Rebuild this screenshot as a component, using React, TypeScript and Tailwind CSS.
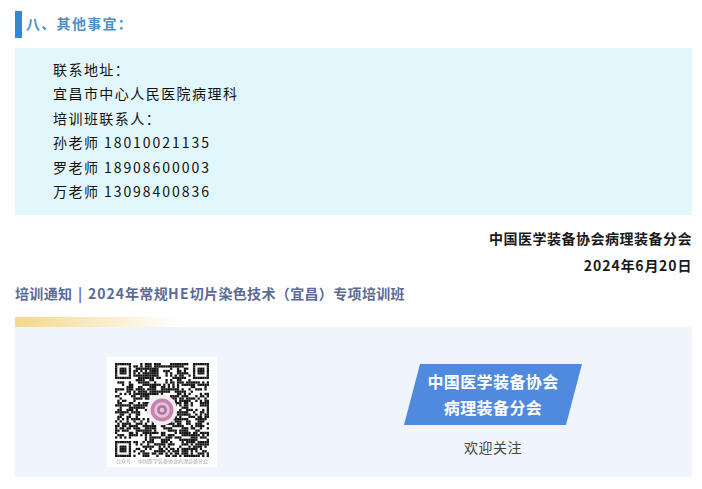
const CONTACTS = [
  { name: '孙老师', phone: '18010021135' },
  { name: '罗老师', phone: '18908600003' },
  { name: '万老师', phone: '13098400836' },
]

const LINES = ['联系地址：', '宜昌市中心人民医院病理科', '培训班联系人：']

const SIZE = 41

// finder pattern test, the rest is filled pseudo randomly
function finder(x: number, y: number) {
  const inBox = (ox: number, oy: number) => {
    const dx = x - ox
    const dy = y - oy
    if (dx < -1 || dy < -1 || dx > 7 || dy > 7) return null
    if (dx < 0 || dy < 0 || dx > 6 || dy > 6) return false
    if (dx === 0 || dy === 0 || dx === 6 || dy === 6) return true
    if (dx >= 2 && dx <= 4 && dy >= 2 && dy <= 4) return true
    return false
  }
  for (const [ox, oy] of [[0, 0], [SIZE - 7, 0], [0, SIZE - 7]]) {
    const r = inBox(ox, oy)
    if (r !== null) return r
  }
  return null
}

function cells() {
  const out: { x: number; y: number }[] = []
  let seed = 20240620
  for (let y = 0; y < SIZE; y++) {
    for (let x = 0; x < SIZE; x++) {
      seed = (seed * 1103515245 + 12345) & 0x7fffffff
      const f = finder(x, y)
      const on = f !== null ? f : (seed >> 16) % 100 < 55
      if (on) out.push({ x, y })
    }
  }
  return out
}

function QrCode() {
  return (
    <div className="flex h-[110px] w-[110px] shrink-0 flex-col items-center bg-white pt-[6px]">
      <svg width="94" height="94" viewBox="0 0 41 41" className="blur-[0.3px]">
        {cells().map((c) => (
          <rect key={`${c.x}-${c.y}`} x={c.x} y={c.y} width="1" height="1" fill="#141414" />
        ))}
        <circle cx="20.5" cy="20.5" r="6.6" fill="#f4eef2" />
        <circle cx="20.5" cy="20.5" r="5" fill="#c583ad" />
        <circle cx="20.5" cy="20.5" r="3.4" fill="#e3c4d8" />
        <circle cx="20.5" cy="20.5" r="2.2" fill="#b773a0" />
        <circle cx="20.5" cy="20.5" r="1" fill="#e3c4d8" />
      </svg>
      <span className="mt-[1px] whitespace-nowrap text-[5px] leading-[6px] text-[#aaa] blur-[0.3px]">公众号 · 中国医学装备协会病理装备分会</span>
    </div>
  )
}

export default function App() {
  return (
    <div
      className="h-[489px] w-[702px] overflow-hidden bg-white pl-[15px] pr-[10px] pt-[11px]"
      style={{ fontFamily: '"Noto Sans CJK SC", "Liberation Sans", sans-serif' }}
    >
      {/* 标题 */}
      <div className="flex h-[27px] items-center border-l-[7px] border-[#2e8bd3] pb-[3px] pl-[4px]">
        <h2 className="text-[14px] font-bold tracking-[1.3px] text-[#4a90c8]">八、其他事宜：</h2>
      </div>

      {/* 联系方式 */}
      <div className="mt-[10px] h-[167px] bg-[#e2f7fc] pl-[38px] pt-[9px] text-[14px] leading-[24.4px] tracking-[1.45px] text-[#111]">
        {LINES.map((line) => (
          <p key={line} className="h-[24.4px]">
            {line}
          </p>
        ))}
        {CONTACTS.map((c) => (
          <p key={c.phone} className="h-[24.4px]">
            {c.name} <span className="tracking-[1.95px]">{c.phone}</span>
          </p>
        ))}
      </div>

      {/* 落款 */}
      <div className="mt-[10px] text-right text-[14px] font-bold leading-[26.5px] tracking-[0.5px] text-[#1a1a1a]">
        <p>中国医学装备协会病理装备分会</p>
        <p>
          <span className="tracking-[1px]">2024</span>年<span className="tracking-[1px]">6</span>月<span className="tracking-[1px]">20</span>日
        </p>
      </div>

      <p className="mt-[2px] text-[14px] font-bold leading-[26px] tracking-[0.35px] text-[#5b6a96]">
        培训通知<span className="[word-spacing:2px]"> | </span><span className="tracking-[1px]">2024</span>年常规<span className="tracking-[1.2px]">HE</span>切片染色技术（宜昌）专项培训班
      </p>

      {/* 底部 */}
      <div className="mt-[11px] h-[10px] w-[167px] bg-gradient-to-r from-[#f4d78c] to-white" />
      <div className="flex h-[150px] items-start bg-[#f0f4fc] pl-[92px] pt-[30px]">
        <QrCode />
        <div className="ml-[187px] mt-[7px] flex w-[178px] flex-col items-center">
          <div className="flex h-[61px] w-full flex-col items-center justify-center bg-[#4f8ade] pb-[2px] text-[16px] font-bold leading-[26px] tracking-[0.4px] text-white [clip-path:polygon(9%_0,100%_0,91%_100%,0_100%)]">
            <p>中国医学装备协会</p>
            <p>病理装备分会</p>
          </div>
          <p className="mt-[12px] text-[14px] leading-[20px] tracking-[0.5px] text-[#444]">欢迎关注</p>
        </div>
      </div>
    </div>
  )
}
